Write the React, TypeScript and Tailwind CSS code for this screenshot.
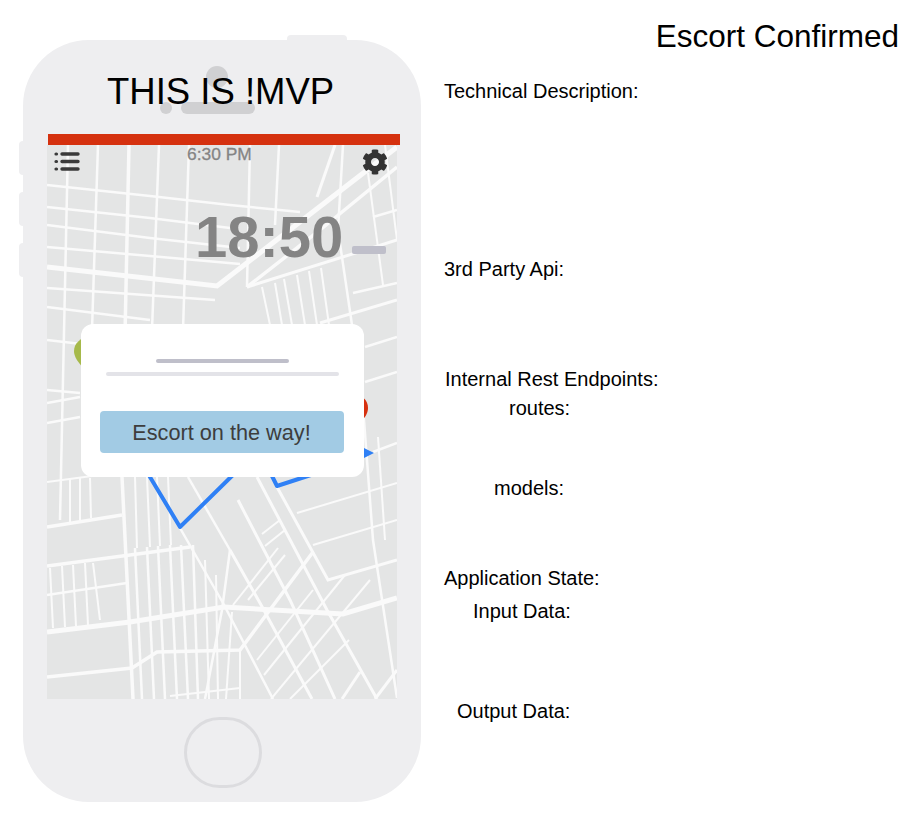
import { FaCog } from "react-icons/fa";

// [stroke width, points] in page coordinates, the svg viewBox matches the screen's place on the page
const roads: [number, string][] = [
  // upper left, cross streets
  [2.5, "47,185 150,196 230,205 300,212"],
  [2.5, "47,207 150,218 230,228"],
  [2.5, "47,225 150,238 240,248"],
  [2.5, "47,247 150,256 240,264"],
  [5, "47,267 217,286 397,147"],
  [2.5, "47,288 215,300"],
  [2.5, "47,307 150,320"],
  [2.5, "47,340 150,352"],
  // upper left, long streets
  [2.5, "68,145 60,520"],
  [2.5, "98,145 92,330"],
  [3.5, "129,145 122,477 133,699"],
  [2.5, "159,145 152,330"],
  [2.5, "189,145 183,330"],
  [2.5, "250,145 247,287"],
  [2.5, "279,145 275,225"],
  [3, "335,145 317,197"],
  [2.5, "343,145 338,230 352,325"],
  [2, "368,173 383,285"],
  [2, "385,145 397,240"],
  // upper right
  [3.5, "397,167 320,230 247,287"],
  [3, "247,287 397,240"],
  [2.5, "373,217 397,210"],
  [2.5, "353,293 397,283"],
  [3, "320,323 397,300"],
  [2, "262,287 270,325"],
  [2, "275,283 282,325"],
  [2, "284,279 292,325"],
  [2, "297,275 305,325"],
  [2, "309,271 317,325"],
  [2, "321,268 329,325"],
  [2.5, "365,347 397,337"],
  [2.5, "365,382 397,372"],
  [2.5, "363,407 373,540 397,698"],
  [2, "378,437 385,540"],
  [2.5, "373,452 397,443"],
  // left of the card
  [2.5, "47,390 80,393"],
  [2.5, "47,403 80,397"],
  [2.5, "47,423 80,417"],
  [2, "47,482 122,472"],
  [3.5, "47,527 122,515"],
  [2, "70,478 70,522"],
  [2, "80,478 80,520"],
  [2, "90,478 91,518"],
  // lower left
  [3.5, "47,566 190,547"],
  [2.5, "47,595 127,583"],
  [2, "50,568 53,628"],
  [2, "62,566 65,627"],
  [2, "73,565 76,626"],
  [2, "85,563 88,625"],
  [2, "93,563 100,620"],
  [5, "47,632 130,622 224,607 343,614 397,598"],
  [3.5, "47,677 132,668 157,652 240,650 313,552"],
  // lower middle, narrow blocks
  [2, "135,477 137,548"],
  [2, "147,477 150,547"],
  [2, "157,477 160,546"],
  [2, "168,477 171,545"],
  [2.5, "135,548 142,699"],
  [2.5, "147,547 154,699"],
  [2.5, "158,546 165,699"],
  [2.5, "170,545 177,699"],
  [2.5, "181,545 188,699"],
  [2.5, "193,545 198,699"],
  [2, "205,560 209,699"],
  [2, "216,575 218,699"],
  [2.5, "188,477 230,550"],
  [2.5, "180,528 223,603 273,699"],
  [2.5, "230,550 222,610 205,699"],
  [2, "232,612 226,699"],
  [2, "240,650 240,699"],
  [2, "170,696 240,688"],
  // lower right, diagonals
  [3, "277,487 328,580 397,560"],
  [3, "257,477 327,610 377,699"],
  [3, "238,500 290,600 335,699"],
  [3, "230,550 260,603 312,699"],
  [2, "297,513 397,483"],
  [2, "313,545 397,520"],
  [2, "257,660 313,590"],
  [2, "264,675 345,575"],
  [2, "271,699 370,580"],
  [2, "290,699 349,640"],
  [3, "342,699 360,672"],
  [2, "248,600 285,555"],
  [2, "233,605 278,548"],
  [2, "262,534 280,520"],
  [2, "265,546 285,530"],
  [3, "375,699 397,670"],
];

const labels = [
  { text: "Technical Description:", className: "mt-[24px] ml-0" },
  { text: "3rd Party Api:", className: "mt-[156px] ml-0" },
  { text: "Internal Rest Endpoints:", className: "mt-[88px] ml-px" },
  { text: "routes:", className: "mt-[7px] ml-[65px]" },
  { text: "models:", className: "mt-[58px] ml-[50px]" },
  { text: "Application State:", className: "mt-[68px] ml-0" },
  { text: "Input Data:", className: "mt-[11px] ml-[29px]" },
  { text: "Output Data:", className: "mt-[78px] ml-[13px]" },
];

function MapLayer() {
  return (
    <svg className="absolute inset-0 blur-[0.4px]" width="350" height="554" viewBox="47 145 350 554" fill="none">
      {roads.map(([width, points], i) => (
        <polyline key={i} points={points} stroke="#fafafa" strokeWidth={width} />
      ))}
      {/* pins and route, mostly hidden under the card */}
      <path d="M90 337 C80 337 74 344 74 351 C74 357 78 362 84 369 L90 369 Z" fill="#a6b94a" />
      <path d="M350 394 C362 394 368 400 368 408 C368 413 365 418 360 422 L350 422 Z" fill="#d6300f" />
      <polyline points="147,472 180,527 236,472" stroke="#2f80f5" strokeWidth="4" strokeLinejoin="round" />
      <polyline points="270,472 277,486 320,472" stroke="#2f80f5" strokeWidth="4" strokeLinejoin="round" />
      <path d="M362 447 L374 453 L362 459 Z" fill="#2f80f5" />
    </svg>
  );
}

function ListIcon() {
  return (
    <svg width="26" height="20" viewBox="0 0 26 20" fill="none" stroke="#3a3a3a" strokeLinecap="round">
      <path d="M2 3 h0.5 M2 10.5 h0.5 M2 18 h0.5" strokeWidth="3.2" />
      <path d="M8 3 h16 M8 10.5 h16 M8 18 h16" strokeWidth="3.4" />
    </svg>
  );
}

function Phone() {
  return (
    <div className="relative ml-[23px] mt-[40px] h-[762px] w-[398px] rounded-[66px] bg-[#eeeef0]">
      {/* side and top buttons */}
      <div className="absolute -left-[4px] top-[101px] h-[34px] w-[4px] rounded-l-sm bg-[#eeeef0]" />
      <div className="absolute -left-[4px] top-[152px] h-[34px] w-[4px] rounded-l-sm bg-[#eeeef0]" />
      <div className="absolute -left-[4px] top-[203px] h-[34px] w-[4px] rounded-l-sm bg-[#eeeef0]" />
      <div className="absolute -top-[5px] left-[264px] h-[5px] w-[60px] rounded-t-sm bg-[#eeeef0]" />

      {/* camera and speaker, the title sits over them */}
      <div className="absolute left-[183px] top-[26px] h-[22px] w-[22px] rounded-full bg-[#d0d0d2]" />
      <div className="absolute left-[137px] top-[62px] h-[12px] w-[12px] rounded-full bg-[#d0d0d2]" />
      <div className="absolute left-[158px] top-[62px] h-[12px] w-[74px] rounded-full bg-[#d0d0d2]" />

      <div className="relative h-[94px] pl-[84px] pt-[30px] text-[36.5px] leading-[44px] text-black">THIS IS !MVP</div>
      <div className="ml-[25px] h-[11px] w-[352px] bg-[#d5310f]" />

      <div className="relative ml-[24px] h-[554px] w-[350px] overflow-hidden bg-[#e4e5e5]">
        <MapLayer />
        <div className="relative flex items-start justify-between pl-[7px] pr-[9px] pt-[5px]">
          <div className="pt-[1px]">
            <ListIcon />
          </div>
          <div className="ml-[107px] -mt-[5px] text-[17.4px] leading-[18px] text-[#848484] [-webkit-text-stroke:0.3px_#848484]">
            6:30 PM
          </div>
          <FaCog className="ml-auto mt-[-1px] text-[#333333]" size={26} />
        </div>
        <div className="relative ml-[148px] mt-[29px] flex items-end">
          <span className="text-[58px] font-bold leading-[66px] text-[#848484]">18:50</span>
          <div className="mb-[16px] ml-[9px] h-[8px] w-[34px] rounded-[2px] bg-[#bfbfca]" />
        </div>
        <div className="absolute left-[34px] top-[179px] flex h-[153px] w-[283px] flex-col items-center rounded-xl bg-white pt-[35px]">
          <div className="h-[4px] w-[133px] rounded-full bg-[#bfbfca]" />
          <div className="mt-[9px] h-[4px] w-[233px] rounded-full bg-[#e3e3e8]" />
          <div className="mr-[2px] mt-[35px] flex h-[42px] w-[244px] items-center justify-center rounded-[4px] bg-[#a2cbe4] pt-[3px] text-[21.7px] text-[#3d3d3d]">
            Escort on the way!
          </div>
        </div>
      </div>

      <div className="ml-[161px] mt-[18px] h-[71px] w-[78px] rounded-full border-[3px] border-[#dcdcdf]" />
    </div>
  );
}

export default function App() {
  return (
    <div className="flex h-[838px] w-[920px] overflow-hidden bg-white font-['Liberation_Sans',Arial,sans-serif]">
      <Phone />
      <div className="ml-[23px] flex w-[455px] flex-col pt-[16px] text-[20px] leading-[22px] text-black">
        <h1 className="self-end text-[31.5px] font-normal leading-[40px]">Escort Confirmed</h1>
        {labels.map((label) => (
          <div key={label.text} className={label.className}>
            {label.text}
          </div>
        ))}
      </div>
    </div>
  );
}
